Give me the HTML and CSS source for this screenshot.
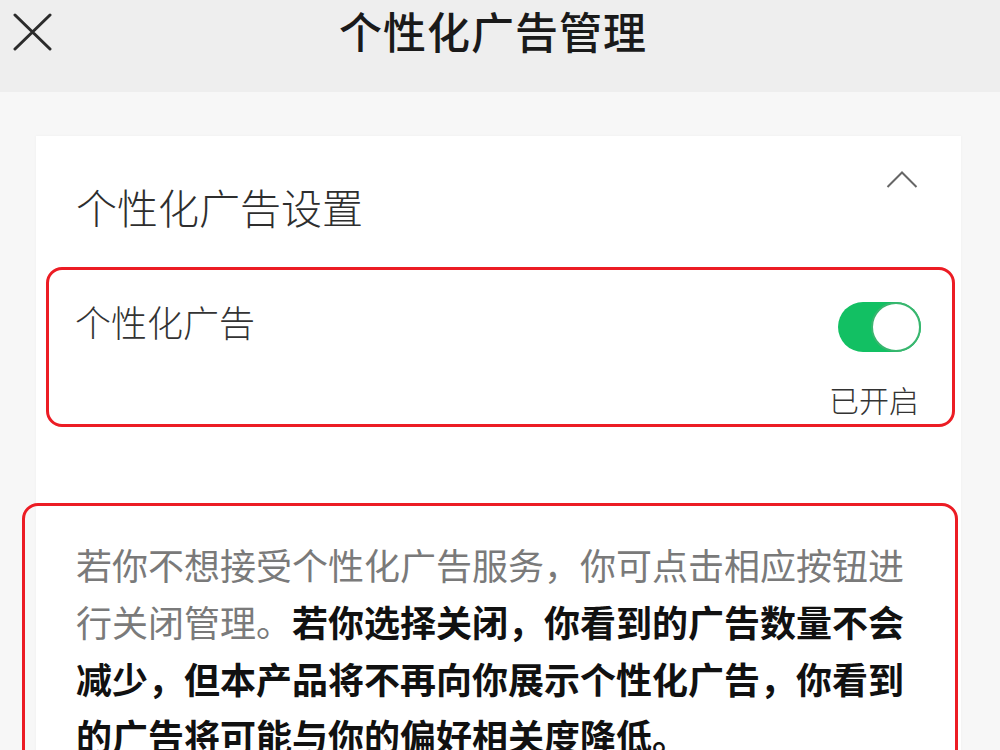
FILE: index.html
```html
<!DOCTYPE html>
<html lang="zh-CN">
<head>
<meta charset="utf-8">
<title>个性化广告管理</title>
<link rel="stylesheet" href="styles.css">
</head>
<body>
<header class="topbar">
  <button class="close" aria-label="关闭">
    <svg width="40" height="40" viewBox="0 0 40 40"><path d="M2 2 L37 36 M37 2 L2 36" stroke="#2b2b2b" stroke-width="3" fill="none" stroke-linecap="round"/></svg>
  </button>
  <h1 class="title">个性化广告管理</h1>
</header>
<main class="page">
  <section class="card">
    <div class="card-head">
      <h2 class="card-title">个性化广告设置</h2>
      <svg class="chevron" width="32" height="20" viewBox="0 0 32 20"><path d="M1.5 17 L16 2.5 L30.5 17" stroke="#666" stroke-width="2" fill="none"/></svg>
    </div>
    <div class="setting">
      <div class="setting-label">个性化广告</div>
      <div class="setting-ctrl">
        <div class="toggle"><span class="knob"></span></div>
        <div class="state">已开启</div>
      </div>
    </div>
    <div class="notice">
      <p class="notice-text">若你不想接受个性化广告服务，你可点击相应按钮进行关闭管理。<strong>若你选择关闭，你看到的广告数量不会减少，但本产品将不再向你展示个性化广告，你看到的广告将可能与你的偏好相关度降低。</strong></p>
    </div>
  </section>
</main>
</body>
</html>
```
FILE: styles.css
```css
* { box-sizing: border-box; }
html, body { margin: 0; padding: 0; }
body {
  background: #f7f7f7;
  font-family: "Noto Sans CJK SC", "Noto Sans", sans-serif;
  width: 1000px;
  height: 750px;
  overflow: hidden;
}
.topbar {
  height: 92px;
  background: #eeeeee;
  display: flex;
  align-items: flex-start;
  position: relative;
}
.close {
  border: 0;
  background: none;
  padding: 0;
  margin: 13px 0 0 13px;
  width: 40px;
  height: 40px;
  display: block;
}
.close svg { display: block; }
.title {
  position: absolute;
  left: 0;
  right: 14px;
  top: 0;
  margin: 0;
  text-align: center;
  font-size: 43px;
  line-height: 60px;
  font-weight: 500;
  color: #1a1a1a;
  letter-spacing: 1px;
}
.page {
  padding: 44px 39px 0 36px;
}
.card {
  background: #fff;
  box-shadow: 0 0 3px rgba(0,0,0,0.04);
  padding: 30px 0 60px 0;
}
.card-head {
  display: flex;
  justify-content: space-between;
  padding: 0 43px 0 40px;
}
.card-title {
  margin: 12px 0 0 0;
  font-size: 41px;
  line-height: 56px;
  font-weight: 300;
  color: #2e2e2e;
}
.chevron {
  display: block;
  margin-top: 4px;
}
.setting {
  margin: 33px 6px 0 10px;
  border: 3px solid #ec1c24;
  border-radius: 16px;
  padding: 32px 31px 5px 26px;
  display: flex;
  justify-content: space-between;
}
.setting-label {
  font-size: 36px;
  line-height: 50px;
  font-weight: 300;
  color: #333;
  margin-top: -6px;
}
.setting-ctrl {
  display: flex;
  flex-direction: column;
  align-items: flex-end;
}
.toggle {
  width: 83px;
  height: 50px;
  border-radius: 25px;
  background: #12c063;
  position: relative;
}
.knob {
  position: absolute;
  right: 0;
  top: 0;
  width: 50px;
  height: 50px;
  border-radius: 50%;
  background: #fff;
  border: 2px solid #39b66f;
}
.state {
  margin-top: 27px;
  font-size: 30px;
  line-height: 40px;
  font-weight: 300;
  color: #333;
  margin-right: 2px;
}
.notice {
  margin: 76px 3px 0 -14px;
  border: 3px solid #ec1c24;
  border-radius: 16px;
  padding: 30px 49px 40px 51px;
}
.notice-text {
  margin: 0;
  font-size: 36px;
  line-height: 57px;
  color: #7a7a7a;
  font-weight: 400;
}
.notice-text strong {
  color: #111;
  font-weight: 700;
}
```
